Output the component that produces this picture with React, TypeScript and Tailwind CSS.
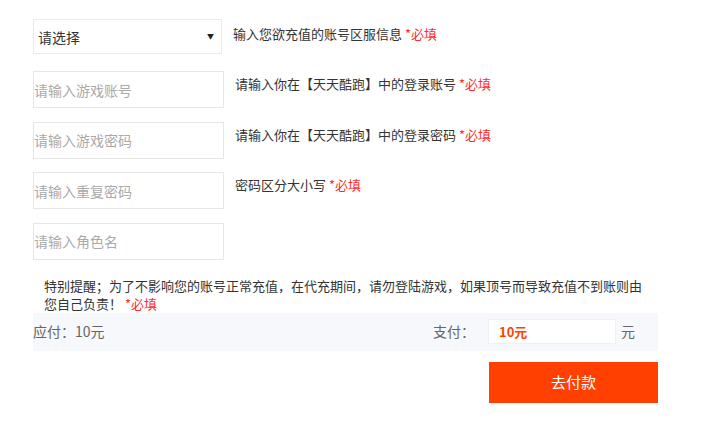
import React from "react";

const font = { fontFamily: '"Noto Sans CJK SC", "Noto Sans", sans-serif' };

const Required = () => <span className="text-[#ff2a2a]">*必填</span>;

const fields = [
  { placeholder: "请输入游戏账号", tip: "请输入你在【天天酷跑】中的登录账号", required: true },
  { placeholder: "请输入游戏密码", tip: "请输入你在【天天酷跑】中的登录密码", required: true },
  { placeholder: "请输入重复密码", tip: "密码区分大小写", required: true },
  { placeholder: "请输入角色名", tip: "", required: false },
];

export default function App() {
  return (
    <div className="w-[712px] h-[424px] bg-white pl-[33px] pt-[19px]" style={font}>
      {/* 区服选择 */}
      <div className="flex items-start">
        <div className="w-[189px] h-[35px] border border-[#ececec] flex items-center justify-between pl-[4px] pr-[7px] text-[14px] text-[#333]">
          <span className="leading-none">请选择</span>
          <span className="text-[7px] leading-none text-[#222]">▼</span>
        </div>
        <div className="ml-[11px] pt-[6px] text-[13px] leading-[18px] text-[#333]">
          输入您欲充值的账号区服信息 <Required />
        </div>
      </div>

      {fields.map((f, i) => (
        <div key={i} className={`flex items-start ${i === 0 ? "mt-[17px]" : "mt-[13.5px]"}`}>
          <input
            placeholder={f.placeholder}
            className="w-[191px] h-[37px] border border-[#e6e6e6] px-0 text-[14px] text-[#333] placeholder:text-[#aaa] outline-none"
          />
          {f.tip && (
            <div className="ml-[11px] pt-[4px] text-[13px] leading-[18px] text-[#333]">
              {f.tip} <Required />
            </div>
          )}
        </div>
      ))}

      {/* 提醒 */}
      <div className="mt-[17px] ml-[11px] w-[604px] text-[13px] leading-[18px] text-[#333]">
        <div>特别提醒；为了不影响您的账号正常充值，在代充期间，请勿登陆游戏，如果顶号而导致充值不到账则由</div>
        <div>
          <span>您自己负责！ </span>
          <Required />
        </div>
      </div>

      <div className="w-[625px] h-[38px] bg-[#f6f8fb] flex items-center text-[14px] text-[#666]">
        <span>应付：10元</span>
        <div className="ml-auto flex items-center">
          <span>支付：</span>
          <div className="ml-[13px] w-[128px] h-[25px] bg-white border border-[#eef0f3] flex items-center pl-[10px] text-[13px] font-bold text-[#ff4400]">
            10元
          </div>
          <span className="ml-[5px] mr-[23px]">元</span>
        </div>
      </div>

      <div className="mt-[11px] w-[625px] flex justify-end">
        <button className="w-[169px] h-[41px] bg-[#ff4000] text-white text-[15px]">去付款</button>
      </div>
    </div>
  );
}
